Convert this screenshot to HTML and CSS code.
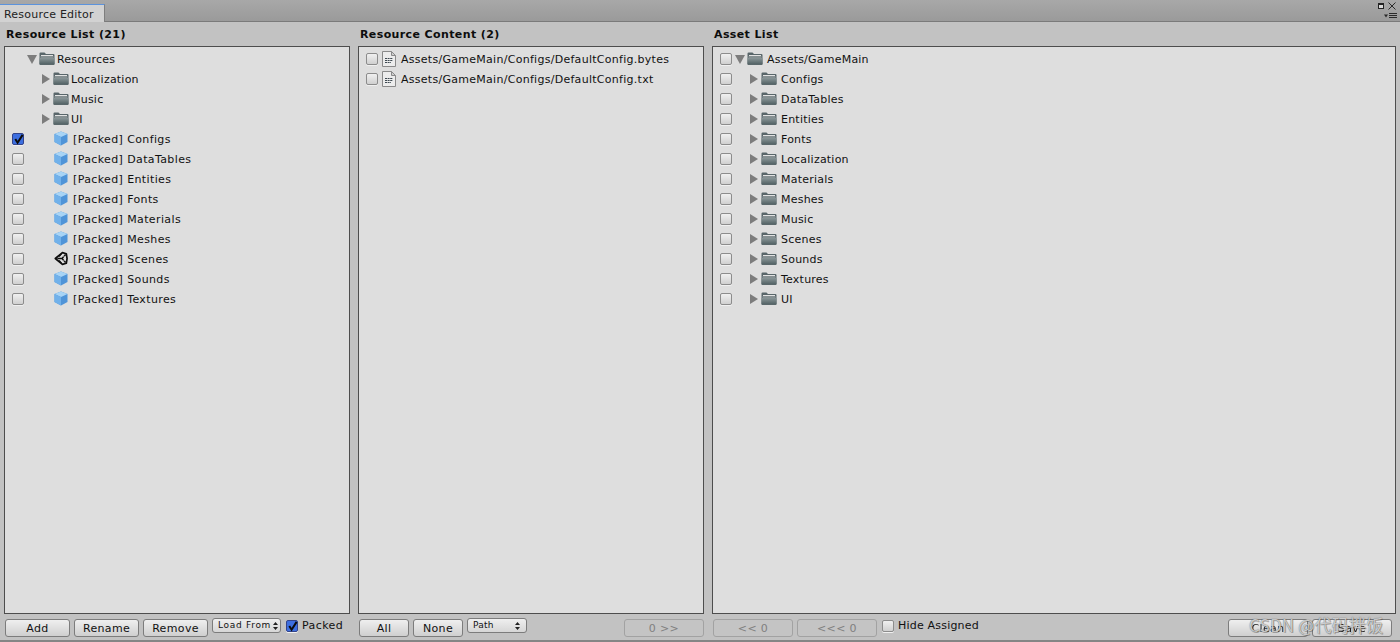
FILE: index.html
```html
<!DOCTYPE html>
<html lang="en">
<head>
<meta charset="utf-8">
<title>Resource Editor</title>
<link rel="stylesheet" href="styles.css">
</head>
<body>
<svg class="defs" width="0" height="0" aria-hidden="true">
  <defs>
    <linearGradient id="fbody" x1="0" y1="0" x2="0" y2="1">
      <stop offset="0" stop-color="#8a9698"/>
      <stop offset="1" stop-color="#4e5e61"/>
    </linearGradient>
    <symbol id="folder" viewBox="0 0 16 13">
      <path d="M0.5 12V1.6Q0.5 0.5 1.6 0.5H5.5L7 2H14.4Q15.5 2 15.5 3.1V12Q15.5 12.7 14.8 12.7H1.2Q0.5 12.7 0.5 12Z" fill="#59666a"/>
      <rect x="2" y="3" width="12" height="1" fill="#e2e2e2"/>
      <rect x="1.5" y="4.5" width="13" height="1" fill="#b4b9ba"/>
      <path d="M0.5 6H15.5V12Q15.5 12.7 14.8 12.7H1.2Q0.5 12.7 0.5 12Z" fill="url(#fbody)"/>
    </symbol>
    <symbol id="cube" viewBox="0 0 14 15">
      <path d="M7 0.5L13.5 3V11L7 14.5L0.5 11V3Z" fill="#4f94d8"/>
      <path d="M7 0.5L13.5 3L7 6L0.5 3Z" fill="#a8d4f5"/>
      <path d="M0.5 3L7 6V14.5L0.5 11Z" fill="#71b1ea"/>
    </symbol>
    <symbol id="unity" viewBox="0 0 15 15">
      <path d="M9 1.2L13.2 2.4L14 7.5L13.2 12.6L9 13.8L1.4 7.5Z" fill="none" stroke="#0d0d0d" stroke-width="1.8" stroke-linejoin="round"/>
      <path d="M3.5 7.5H8.6L12.4 3.2M8.6 7.5L12.4 11.8" fill="none" stroke="#0d0d0d" stroke-width="1.6"/>
      <path d="M8.2 2.4L5.6 5.4M8.2 12.6L5.6 9.6" fill="none" stroke="#0d0d0d" stroke-width="1.2"/>
      <path d="M10.4 4.4L11.6 7.5L10.4 10.6" fill="none" stroke="#dedede" stroke-width="1"/>
    </symbol>
    <symbol id="file" viewBox="0 0 14 16">
      <path d="M0.5 0.5H9.5L13.5 4.5V15.5H0.5Z" fill="#ececec" stroke="#8a8a8a"/>
      <path d="M9.5 0.5V4.5H13.5Z" fill="#cfcfcf" stroke="#8a8a8a"/>
      <path d="M3 7.5H11M3 9.5H11M3 11.5H9" stroke="#3f4a52" stroke-width="1" stroke-dasharray="2 0.6"/>
    </symbol>
    <symbol id="check" viewBox="0 0 12 12">
      <path d="M2.5 5.5L5 9.5L10.5 1" fill="none" stroke="#0c0c0c" stroke-width="2.2"/>
    </symbol>
    <symbol id="updown" viewBox="0 0 5 8">
      <path d="M2.5 0L5 3H0ZM2.5 8L0 5H5Z" fill="#222"/>
    </symbol>
  </defs>
</svg>

<header class="tabbar">
  <div class="tab">Resource Editor</div>
  <div class="winctl">
    <svg class="ctl-max" width="6" height="6" viewBox="0 0 6 6"><rect x="0.5" y="0.5" width="5" height="5" fill="#d8d8d8" stroke="#222"/><rect x="0" y="0" width="6" height="2" fill="#222"/></svg>
    <svg class="ctl-x" width="8" height="8" viewBox="0 0 8 8"><path d="M0.5 0.5L7.5 7.5M7.5 0.5L0.5 7.5" stroke="#2a2a2a" stroke-width="1"/></svg>
    <svg class="ctl-menu" width="14" height="6" viewBox="0 0 14 6"><path d="M0 1.5H4L2 4.5Z" fill="#2a2a2a"/><path d="M5 0.5H13M5 2.5H13M5 4.5H13" stroke="#2a2a2a"/></svg>
  </div>
</header>

<main class="editor">
  <section class="panel">
    <h2 class="title">Resource List (21)</h2>
    <div class="box">
      <div class="row"><span class="cb none"></span><span class="tri open m3"></span><svg class="ic-folder m-f1"><use href="#folder"/></svg><span class="lbl l2">Resources</span></div>
      <div class="row"><span class="cb none"></span><span class="tri closed m18"></span><svg class="ic-folder m-f2"><use href="#folder"/></svg><span class="lbl l2">Localization</span></div>
      <div class="row"><span class="cb none"></span><span class="tri closed m18"></span><svg class="ic-folder m-f2"><use href="#folder"/></svg><span class="lbl l2">Music</span></div>
      <div class="row"><span class="cb none"></span><span class="tri closed m18"></span><svg class="ic-folder m-f2"><use href="#folder"/></svg><span class="lbl l2">UI</span></div>
      <div class="row"><span class="cb on"><svg class="tick"><use href="#check"/></svg></span><svg class="ic-cube m30"><use href="#cube"/></svg><span class="lbl l5 packed">[Packed] Configs</span></div>
      <div class="row"><span class="cb"></span><svg class="ic-cube m30"><use href="#cube"/></svg><span class="lbl l5 packed">[Packed] DataTables</span></div>
      <div class="row"><span class="cb"></span><svg class="ic-cube m30"><use href="#cube"/></svg><span class="lbl l5 packed">[Packed] Entities</span></div>
      <div class="row"><span class="cb"></span><svg class="ic-cube m30"><use href="#cube"/></svg><span class="lbl l5 packed">[Packed] Fonts</span></div>
      <div class="row"><span class="cb"></span><svg class="ic-cube m30"><use href="#cube"/></svg><span class="lbl l5 packed">[Packed] Materials</span></div>
      <div class="row"><span class="cb"></span><svg class="ic-cube m30"><use href="#cube"/></svg><span class="lbl l5 packed">[Packed] Meshes</span></div>
      <div class="row"><span class="cb"></span><svg class="ic-cube m30"><use href="#unity"/></svg><span class="lbl l5 packed">[Packed] Scenes</span></div>
      <div class="row"><span class="cb"></span><svg class="ic-cube m30"><use href="#cube"/></svg><span class="lbl l5 packed">[Packed] Sounds</span></div>
      <div class="row"><span class="cb"></span><svg class="ic-cube m30"><use href="#cube"/></svg><span class="lbl l5 packed">[Packed] Textures</span></div>
    </div>
    <footer class="foot">
      <button class="btn w65">Add</button>
      <button class="btn w65">Rename</button>
      <button class="btn w65">Remove</button>
      <div class="drop w69 wide">Load From<svg class="updown"><use href="#updown"/></svg></div>
      <label class="opt opt-packed"><span class="cb on"><svg class="tick"><use href="#check"/></svg></span>Packed</label>
    </footer>
  </section>

  <section class="panel">
    <h2 class="title">Resource Content (2)</h2>
    <div class="box">
      <div class="row"><span class="cb"></span><svg class="ic-file"><use href="#file"/></svg><span class="lbl l5 path">Assets/GameMain/Configs/DefaultConfig.bytes</span></div>
      <div class="row"><span class="cb"></span><svg class="ic-file"><use href="#file"/></svg><span class="lbl l5 path">Assets/GameMain/Configs/DefaultConfig.txt</span></div>
    </div>
    <footer class="foot">
      <button class="btn w50">All</button>
      <button class="btn w50">None</button>
      <div class="drop w60 spread">Path<svg class="updown"><use href="#updown"/></svg></div>
      <button class="btn w80 off push">0 &gt;&gt;</button>
    </footer>
  </section>

  <section class="panel">
    <h2 class="title">Asset List</h2>
    <div class="box">
      <div class="row"><span class="cb"></span><span class="tri open m3"></span><svg class="ic-folder m-f1"><use href="#folder"/></svg><span class="lbl l4">Assets/GameMain</span></div>
      <div class="row"><span class="cb"></span><span class="tri closed m18"></span><svg class="ic-folder m-f2"><use href="#folder"/></svg><span class="lbl l4">Configs</span></div>
      <div class="row"><span class="cb"></span><span class="tri closed m18"></span><svg class="ic-folder m-f2"><use href="#folder"/></svg><span class="lbl l4">DataTables</span></div>
      <div class="row"><span class="cb"></span><span class="tri closed m18"></span><svg class="ic-folder m-f2"><use href="#folder"/></svg><span class="lbl l4">Entities</span></div>
      <div class="row"><span class="cb"></span><span class="tri closed m18"></span><svg class="ic-folder m-f2"><use href="#folder"/></svg><span class="lbl l4">Fonts</span></div>
      <div class="row"><span class="cb"></span><span class="tri closed m18"></span><svg class="ic-folder m-f2"><use href="#folder"/></svg><span class="lbl l4">Localization</span></div>
      <div class="row"><span class="cb"></span><span class="tri closed m18"></span><svg class="ic-folder m-f2"><use href="#folder"/></svg><span class="lbl l4">Materials</span></div>
      <div class="row"><span class="cb"></span><span class="tri closed m18"></span><svg class="ic-folder m-f2"><use href="#folder"/></svg><span class="lbl l4">Meshes</span></div>
      <div class="row"><span class="cb"></span><span class="tri closed m18"></span><svg class="ic-folder m-f2"><use href="#folder"/></svg><span class="lbl l4">Music</span></div>
      <div class="row"><span class="cb"></span><span class="tri closed m18"></span><svg class="ic-folder m-f2"><use href="#folder"/></svg><span class="lbl l4">Scenes</span></div>
      <div class="row"><span class="cb"></span><span class="tri closed m18"></span><svg class="ic-folder m-f2"><use href="#folder"/></svg><span class="lbl l4">Sounds</span></div>
      <div class="row"><span class="cb"></span><span class="tri closed m18"></span><svg class="ic-folder m-f2"><use href="#folder"/></svg><span class="lbl l4">Textures</span></div>
      <div class="row"><span class="cb"></span><span class="tri closed m18"></span><svg class="ic-folder m-f2"><use href="#folder"/></svg><span class="lbl l4">UI</span></div>
    </div>
    <footer class="foot foot-end">
      <button class="btn w80 off">&lt;&lt; 0</button>
      <button class="btn w80 off">&lt;&lt;&lt; 0</button>
      <label class="opt opt-hide"><span class="cb"></span>Hide Assigned</label>
      <button class="btn w80 push blurred">Clean</button>
      <button class="btn w80 blurred">Save</button>
    </footer>
  </section>
</main>
<div class="watermark">CSDN @代码拌饭</div>
</body>
</html>
```
FILE: styles.css
```css
* { box-sizing: border-box; }
html, body { margin: 0; height: 100%; }
body {
  width: 1400px;
  height: 642px;
  overflow: hidden;
  position: relative;
  display: flex;
  flex-direction: column;
  background: #c2c2c2;
  color: #111;
  font: 11px/14px "DejaVu Sans", Verdana, sans-serif;
  letter-spacing: 0.02em;
  border-bottom: 2px solid #858585;
}
.defs { position: absolute; }

.tabbar {
  flex: none;
  height: 22px;
  display: flex;
  justify-content: space-between;
  align-items: flex-end;
  background: linear-gradient(#a8a8a8, #9a9a9a);
  border-bottom: 1px solid #7a7a7a;
}
.tab {
  width: 105px;
  height: 18px;
  margin-bottom: -1px;
  padding: 3px 0 0 4px;
  background: #d2d2d2;
  border-top: 1px solid #5c93dd;
  border-right: 1px solid #7e7e7e;
  color: #222;
  white-space: nowrap;
}
.winctl {
  position: relative;
  align-self: flex-start;
  width: 28px;
  height: 20px;
}
.winctl svg { position: absolute; display: block; }
.ctl-max { left: 6px; top: 3px; }
.ctl-x { left: 16px; top: 2px; }
.ctl-menu { left: 12px; top: 13px; }

.editor {
  flex: 1;
  min-height: 0;
  display: grid;
  grid-template-columns: 346px 346px 684px;
  column-gap: 8px;
  padding: 0 4px;
}
.panel { min-width: 0; display: flex; flex-direction: column; }
.title {
  flex: none;
  height: 24px;
  margin: 0;
  padding: 6px 0 0 2px;
  font-size: 11px;
  line-height: 14px;
  font-weight: bold;
  letter-spacing: 0.035em;
  color: #0d0d0d;
  white-space: nowrap;
}
.box {
  flex: none;
  height: 568px;
  padding-top: 2px;
  background: #dedede;
  border: 1px solid #4d4d4d;
}
.row {
  display: flex;
  align-items: center;
  height: 20px;
  padding-left: 7px;
  white-space: nowrap;
}
.cb {
  flex: none;
  position: relative;
  display: block;
  width: 12px;
  height: 12px;
  border: 1px solid #8c8c8c;
  border-radius: 2px;
  background: linear-gradient(#f0f0f0, #d0d0d0);
  box-shadow: 0 1px 0 #f0f0f0;
}
.cb.none { visibility: hidden; }
.cb.on { background: #3d6fe0; border-color: #33448a; }
.tick { position: absolute; left: 0; top: 0; width: 11px; height: 11px; }

.tri { flex: none; display: block; width: 0; height: 0; }
.tri.closed { border-left: 8px solid #7d7d7d; border-top: 5px solid transparent; border-bottom: 5px solid transparent; }
.tri.open { border-top: 9px solid #7d7d7d; border-left: 5px solid transparent; border-right: 5px solid transparent; }
.m3 { margin-left: 3px; }
.m18 { margin-left: 18px; }
.m30 { margin-left: 30px; }
.ic-folder { flex: none; width: 16px; height: 13px; margin-bottom: 1px; }
.m-f1 { margin-left: 2px; }
.m-f2 { margin-left: 3px; }
.ic-cube { flex: none; width: 14px; height: 15px; margin-bottom: 1px; }
.ic-file { flex: none; width: 14px; height: 16px; margin-left: 4px; margin-bottom: 1px; }
.lbl { color: #111; padding-top: 2px; }
.packed { letter-spacing: 0.38px; }
.path { letter-spacing: 0.28px; }
.l2 { margin-left: 2px; }
.l4 { margin-left: 4px; }
.l5 { margin-left: 5px; }

.foot {
  flex: 1;
  display: flex;
  align-items: flex-start;
  gap: 4px;
  padding: 5px 0 0 1px;
}
.foot-end { padding-right: 4px; }
.btn {
  flex: none;
  height: 18px;
  padding: 2px 0 0;
  font: inherit;
  letter-spacing: 0.35px;
  color: #111;
  background: linear-gradient(#efefef, #cfcfcf);
  border: 1px solid #7c7c7c;
  border-radius: 3px;
}
.off { background: #c4c4c4; border-color: #a2a2a2; color: #808080; }
.w50 { width: 50px; }
.w65 { width: 65px; }
.w80 { width: 80px; }
.push { margin-left: auto; }
.drop {
  flex: none;
  display: flex;
  align-items: center;
  height: 15px;
  margin-top: -1px;
  padding: 0 3px 0 5px;
  gap: 2px;
  font-size: 9px;
  line-height: 13px;
  background: linear-gradient(#efefef, #d6d6d6);
  border: 1px solid #7c7c7c;
  border-radius: 3px;
  white-space: nowrap;
}
.wide { letter-spacing: 0.7px; }
.w60 { width: 60px; }
.w69 { width: 69px; }
.spread { justify-content: space-between; padding-right: 6px; }
.updown { flex: none; width: 5px; height: 8px; }
.opt {
  flex: none;
  display: flex;
  align-items: center;
  gap: 4px;
  height: 14px;
  line-height: 18px;
  letter-spacing: 0.2px;
  white-space: nowrap;
}
.opt-packed { margin-left: 1px; letter-spacing: 0.4px; }
.opt-hide { margin-left: 1px; }
.blurred { color: #222; filter: blur(0.35px); }
.watermark {
  position: absolute;
  left: 1249px;
  top: 614px;
  z-index: 2;
  font: 17px/22px "Noto Sans CJK SC", "DejaVu Sans", sans-serif;
  letter-spacing: 0.2px;
  color: rgba(240, 240, 240, 0.75);
  text-shadow: 0 0 1px rgba(40, 40, 40, 0.8), 1px 1px 0 rgba(70, 70, 70, 0.35);
  white-space: nowrap;
  pointer-events: none;
}
```
